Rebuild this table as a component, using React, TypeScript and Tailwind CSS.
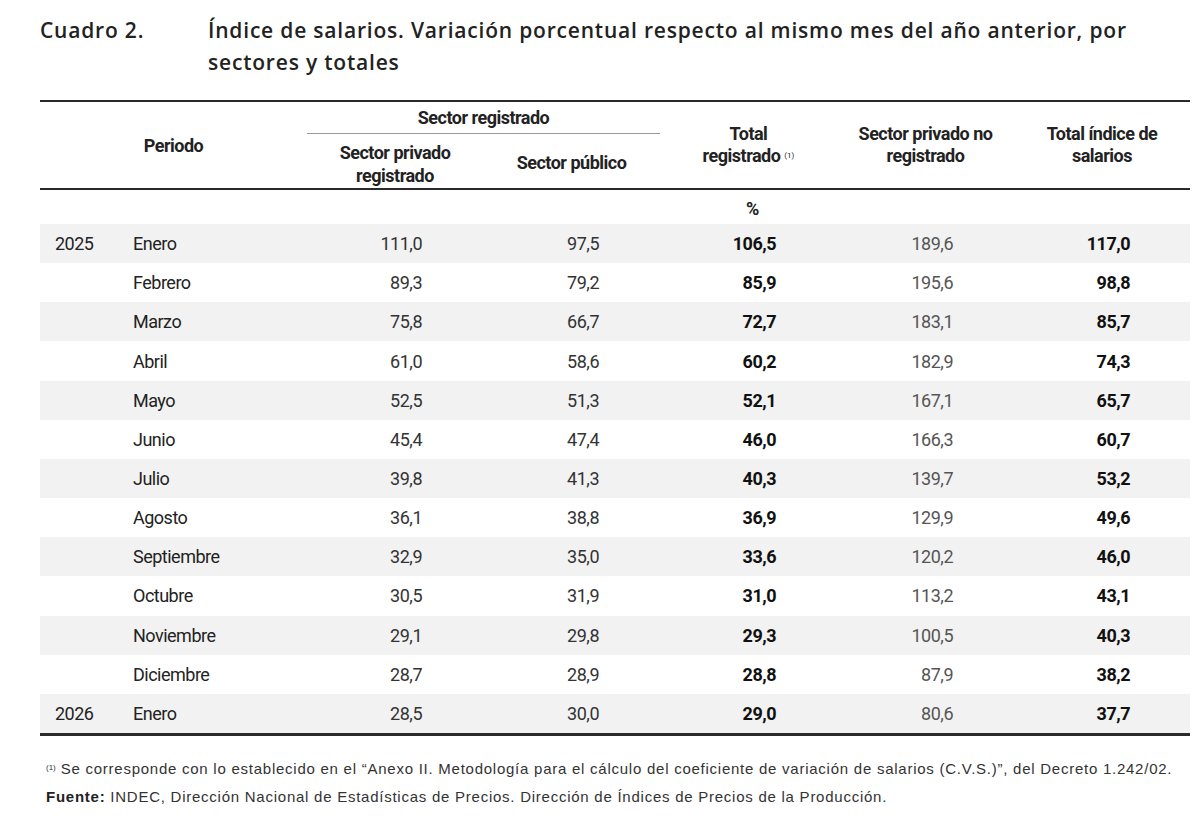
import React from "react";

const rows: [string, string, string, string, string, string, string][] = [
  ["2025", "Enero", "111,0", "97,5", "106,5", "189,6", "117,0"],
  ["", "Febrero", "89,3", "79,2", "85,9", "195,6", "98,8"],
  ["", "Marzo", "75,8", "66,7", "72,7", "183,1", "85,7"],
  ["", "Abril", "61,0", "58,6", "60,2", "182,9", "74,3"],
  ["", "Mayo", "52,5", "51,3", "52,1", "167,1", "65,7"],
  ["", "Junio", "45,4", "47,4", "46,0", "166,3", "60,7"],
  ["", "Julio", "39,8", "41,3", "40,3", "139,7", "53,2"],
  ["", "Agosto", "36,1", "38,8", "36,9", "129,9", "49,6"],
  ["", "Septiembre", "32,9", "35,0", "33,6", "120,2", "46,0"],
  ["", "Octubre", "30,5", "31,9", "31,0", "113,2", "43,1"],
  ["", "Noviembre", "29,1", "29,8", "29,3", "100,5", "40,3"],
  ["", "Diciembre", "28,7", "28,9", "28,8", "87,9", "38,2"],
  ["2026", "Enero", "28,5", "30,0", "29,0", "80,6", "37,7"],
];

export default function App() {
  return (
    <div className="w-[1200px] h-[819px] bg-white overflow-hidden">
      <div className="pl-[40px] pr-[10px] pt-[14px]">
        <div className="flex font-['Open_Sans',sans-serif] font-semibold text-[21px] tracking-[0.8px] leading-[32px] text-[#222]">
          <div className="w-[168px] shrink-0">Cuadro 2.</div>
          <div className="w-[960px]">
            Índice de salarios. Variación porcentual respecto al mismo mes del año anterior, por sectores y totales
          </div>
        </div>
        <div className="mt-[22px] w-[1150px] font-['Roboto',sans-serif] text-[#222] tracking-[-0.5px]">
          <div className="h-[2px] bg-[#2a2a2a]" />
          <div className="grid grid-cols-[77px_190px_176px_177px_177px_177px_176px] grid-rows-[31px_1px_54px] text-[18px] font-bold leading-[22px] text-center">
            <div className="col-span-2 row-span-3 flex items-center justify-center pt-[2px]">Periodo</div>
            <div className="col-span-2 flex items-center justify-center">Sector registrado</div>
            <div className="row-span-3 flex items-center justify-center">
              <span>
                Total
                <br />
                registrado <sup className="text-[8px] font-normal tracking-normal">(1)</sup>
              </span>
            </div>
            <div className="row-span-3 flex items-center justify-center">
              <span>
                Sector privado no
                <br />
                registrado
              </span>
            </div>
            <div className="row-span-3 flex items-center justify-center">
              <span>
                Total índice de
                <br />
                salarios
              </span>
            </div>
            <div className="col-span-2 bg-[#9a9a9a]" />
            <div className="flex items-center justify-center pt-[6px] leading-[23px]">
              <span>
                Sector privado
                <br />
                registrado
              </span>
            </div>
            <div className="flex items-center justify-center pt-[3px]">Sector público</div>
          </div>
          <div className="h-[2px] bg-[#2a2a2a]" />
          <div className="grid grid-cols-[77px_190px_176px_177px_177px_177px_176px] h-[34px] items-center text-[18px] font-bold">
            <div />
            <div />
            <div />
            <div />
            <div className="text-center pl-[8px] pt-[3px]">%</div>
          </div>
          {rows.map((r, i) => (
            <div
              key={i}
              className={`grid grid-cols-[77px_190px_176px_177px_177px_177px_176px] h-[39.17px] items-center text-[18px] ${
                i % 2 === 0 ? "bg-[#f2f2f2]" : "bg-white"
              }`}
            >
              <div className="pl-[15px] text-[#222]">{r[0]}</div>
              <div className="pl-[16px] text-[#222]">{r[1]}</div>
              <div className="text-right pr-[61px] text-[#333]">{r[2]}</div>
              <div className="text-right pr-[61px] text-[#333]">{r[3]}</div>
              <div className="text-right pr-[61px] font-bold text-[#111]">{r[4]}</div>
              <div className="text-right pr-[61px] text-[#555]">{r[5]}</div>
              <div className="text-right pr-[60px] font-bold text-[#111]">{r[6]}</div>
            </div>
          ))}
          <div className="h-[3px] bg-[#2a2a2a]" />
        </div>
        <div className="mt-[19px] pl-[6px] font-['Liberation_Sans',Arial,sans-serif] text-[15px] tracking-[0.75px] leading-[28px] text-[#333]">
          <div>
            <sup className="text-[8px] tracking-normal">(1)</sup> Se corresponde con lo establecido en el “Anexo II. Metodología para el cálculo del coeficiente de variación de salarios (C.V.S.)”, del Decreto 1.242/02.
          </div>
          <div>
            <span className="font-bold text-[#222]">Fuente:</span> INDEC, Dirección Nacional de Estadísticas de Precios. Dirección de Índices de Precios de la Producción.
          </div>
        </div>
      </div>
    </div>
  );
}
